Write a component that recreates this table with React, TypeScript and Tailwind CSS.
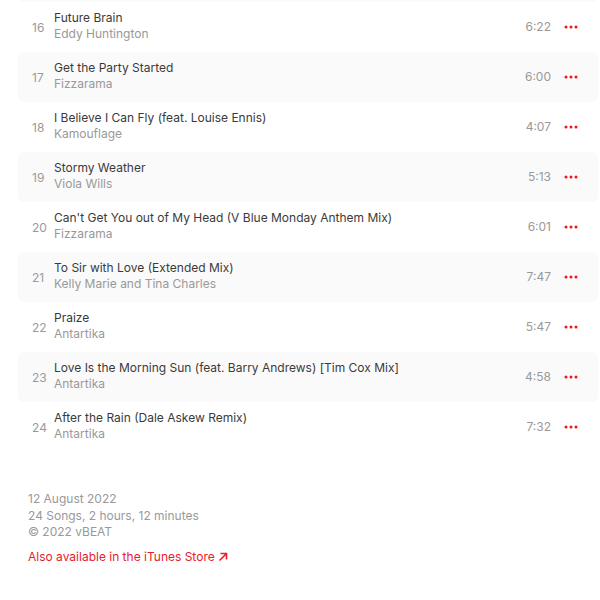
const tracks = [
  { n: 15, title: "", artist: "", time: "" },
  { n: 16, title: "Future Brain", artist: "Eddy Huntington", time: "6:22" },
  { n: 17, title: "Get the Party Started", artist: "Fizzarama", time: "6:00" },
  { n: 18, title: "I Believe I Can Fly (feat. Louise Ennis)", artist: "Kamouflage", time: "4:07" },
  { n: 19, title: "Stormy Weather", artist: "Viola Wills", time: "5:13" },
  { n: 20, title: "Can't Get You out of My Head (V Blue Monday Anthem Mix)", artist: "Fizzarama", time: "6:01" },
  { n: 21, title: "To Sir with Love (Extended Mix)", artist: "Kelly Marie and Tina Charles", time: "7:47" },
  { n: 22, title: "Praize", artist: "Antartika", time: "5:47" },
  { n: 23, title: "Love Is the Morning Sun (feat. Barry Andrews) [Tim Cox Mix]", artist: "Antartika", time: "4:58" },
  { n: 24, title: "After the Rain (Dale Askew Remix)", artist: "Antartika", time: "7:32" },
];

function Dots() {
  return (
    <svg width="14" height="4" viewBox="0 0 14 4" className="shrink-0">
      <circle cx="2" cy="2" r="1.5" fill="#f0141e" />
      <circle cx="7" cy="2" r="1.5" fill="#f0141e" />
      <circle cx="12" cy="2" r="1.5" fill="#f0141e" />
    </svg>
  );
}

export default function App() {
  return (
    <div className="w-[600px] h-[600px] bg-white overflow-hidden font-['Inter',sans-serif]">
      <div className="pl-[18px] pr-[2px] -mt-[48px]">
        {tracks.map((t, i) => (
          <div
            key={t.n}
            className={`flex items-center h-[50px] rounded-md pl-[14px] pr-[20px] ${i % 2 === 0 ? "bg-[#fafafa]" : "bg-white"}`}
          >
            {t.title && (
              <>
                <div className="w-[22px] text-[12px] text-[#9a9a9a] pt-[1px]">{t.n}</div>
                <div className="flex-1 flex flex-col leading-[16px] -mt-[2px]">
                  <span className="text-[12px] text-[#3a3a3a]">{t.title}</span>
                  <span className="text-[12px] text-[#999999]">{t.artist}</span>
                </div>
                <div className="text-[12px] text-[#999999] mr-[13px]">{t.time}</div>
                <Dots />
              </>
            )}
          </div>
        ))}
      </div>
      <div className="pl-[28px] pt-[39px] text-[12px] leading-[16.5px] text-[#999999]">
        <div>12 August 2022</div>
        <div>24 Songs, 2 hours, 12 minutes</div>
        <div>© 2022 vBEAT</div>
        <div className="mt-[8px] text-[#e8202e] flex items-center gap-[3px]">
          Also available in the iTunes Store
          <svg width="10" height="10" viewBox="0 0 10 10" fill="none" stroke="#e8202e" strokeWidth="1.6">
            <path d="M1.5 8.5L8.5 1.5M2.5 1.5h6V7.5" />
          </svg>
        </div>
      </div>
    </div>
  );
}
